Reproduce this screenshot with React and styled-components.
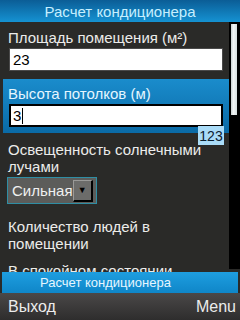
import styled, {createGlobalStyle} from 'styled-components'

const GlobalStyle = createGlobalStyle`
  html, body {
    margin: 0;
    padding: 0;
    background: #2a2a28;
  }
  * {
    box-sizing: border-box;
  }
`

const Screen = styled.div`
  width: 240px;
  height: 320px;
  display: flex;
  flex-direction: column;
  overflow: hidden;
  font-family: "Liberation Sans", Arial, sans-serif;
  background: #2a2a28;
`

const Header = styled.div`
  height: 22px;
  flex: none;
  display: flex;
  align-items: center;
  justify-content: center;
  background: linear-gradient(#0b5d96, #1592d2);
  color: #c6efff;
  font-size: 15px;
`

const Body = styled.div`
  flex: 1;
  display: flex;
  min-height: 0;
`

const Content = styled.div`
  flex: 1;
  overflow: hidden;
  display: flex;
  flex-direction: column;
  gap: 2px;
  padding: 1px 0 0 3px;
`

const Field = styled.div`
  position: relative;
  display: flex;
  flex-direction: column;
  gap: 2px;
  padding: 6px 3px ${p => (p.$tight ? '2px' : '6px')};
  background: ${p => (p.$active ? 'linear-gradient(#1a8ccc, #0a6aa6)' : 'transparent')};
`

const Label = styled.div`
  font-size: 15px;
  line-height: 17px;
  padding-left: 2px;
  color: ${p => (p.$active ? '#e4f6ff' : '#ececea')};
`

const Input = styled.div`
  height: 23px;
  margin: 0 3px;
  background: #fff;
  border: ${p => (p.$active ? '2px solid #000' : '1px solid #4a4a4a')};
  color: #000;
  font-size: 15px;
  display: flex;
  align-items: center;
  padding-left: ${p => (p.$active ? '2px' : '3px')};
`

const Caret = styled.span`
  display: inline-block;
  width: 1px;
  height: 16px;
  background: #000;
  margin-left: 1px;
`

const Badge = styled.div`
  position: absolute;
  right: 5px;
  bottom: -12px;
  width: 26px;
  height: 19px;
  background: #aadcf8;
  color: #0c2030;
  font-size: 14px;
  display: flex;
  align-items: center;
  justify-content: center;
  z-index: 1;
`

const Select = styled.div`
  align-self: flex-start;
  margin-left: 1px;
  width: 90px;
  height: 27px;
  background: #5c5c5a;
  border: 1px solid #2f8ea4;
  display: flex;
  align-items: center;
  justify-content: space-between;
  padding: 0 3px 0 4px;
  color: #f0f0f0;
  font-size: 15px;
`

const DropButton = styled.div`
  width: 21px;
  height: 22px;
  background: #6c6c6a;
  border-top: 1px solid #9a9a98;
  border-left: 1px solid #9a9a98;
  border-right: 2px solid #000;
  border-bottom: 2px solid #000;
  color: #000;
  font-size: 9px;
  display: flex;
  align-items: center;
  justify-content: center;
`

const Scrollbar = styled.div`
  width: 11px;
  flex: none;
  background: #000;
  margin-bottom: 3px;
  padding: 2px 3px 0 2px;
`

const Thumb = styled.div`
  height: 91px;
  background: linear-gradient(90deg, #c8d0d0, #f2f6f6 40%, #d8e0e0);
`

const StatusBar = styled.div`
  height: 21px;
  flex: none;
  margin: 0 2px;
  background: linear-gradient(#1e9ee0, #0f86c8);
  color: #e6f6ff;
  font-size: 13px;
  display: flex;
  align-items: center;
  padding-left: 38px;
`

const SoftKeys = styled.div`
  height: 27px;
  flex: none;
  background: linear-gradient(#4a4848, #2e2d2d);
  display: flex;
  align-items: center;
  justify-content: space-between;
  padding: 0 4px 0 8px;
  color: #ececec;
  font-size: 16px;
`

export default function App() {
    return (
        <Screen>
            <GlobalStyle/>
            <Header>Расчет кондиционера</Header>
            <Body>
                <Content>
                    <Field>
                        <Label>Площадь помещения (м²)</Label>
                        <Input>23</Input>
                    </Field>
                    <Field $active>
                        <Label $active>Высота потолков (м)</Label>
                        <Input $active>3<Caret/></Input>
                        <Badge>123</Badge>
                    </Field>
                    <Field>
                        <Label>Освещенность солнечными лучами</Label>
                        <Select>
                            Сильная
                            <DropButton>▼</DropButton>
                        </Select>
                    </Field>
                    <Field $tight>
                        <Label>Количество людей в помещении</Label>
                    </Field>
                    <Field>
                        <Label>В спокойном состоянии</Label>
                    </Field>
                </Content>
                <Scrollbar>
                    <Thumb/>
                </Scrollbar>
            </Body>
            <StatusBar>Расчет кондиционера</StatusBar>
            <SoftKeys>
                <span>Выход</span>
                <span>Menu</span>
            </SoftKeys>
        </Screen>
    )
}
